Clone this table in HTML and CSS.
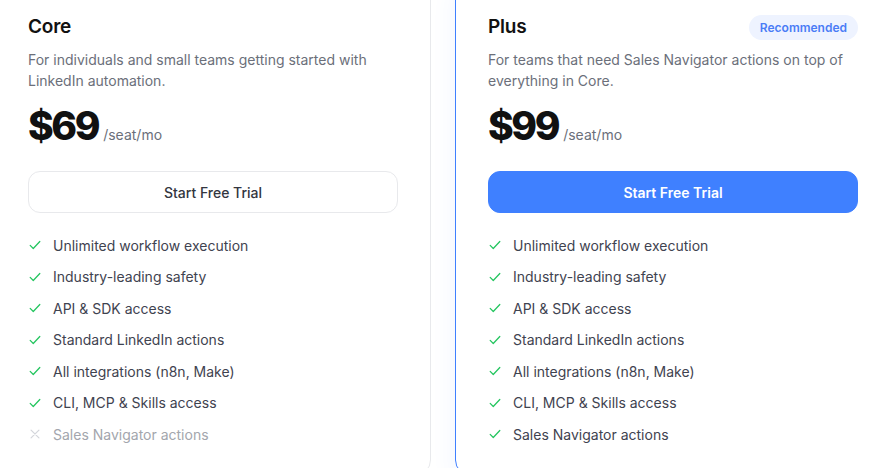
FILE: index.html
```html
<!DOCTYPE html>
<html lang="en">
<head>
    <meta charset="UTF-8">
    <meta name="viewport" content="width=device-width, initial-scale=1.0">
    <title>Pricing</title>
    <link rel="stylesheet" href="styles.css">
</head>
<body>
    <div class="pricing-grid">
        <div class="plan-card">
            <div class="plan-head">
                <h2 class="plan-name">Core</h2>
            </div>
            <p class="plan-desc">For individuals and small teams getting started with LinkedIn automation.</p>
            <div class="plan-price">
                <span class="price-amount">$69</span>
                <span class="price-unit">/seat/mo</span>
            </div>
            <button class="plan-button">Start Free Trial</button>
            <ul class="feature-list">
                <li class="feature"><svg class="feature-icon check" viewBox="0 0 16 16"><path d="M2.5 8.5l3.5 3.5 7.5-8"/></svg>Unlimited workflow execution</li>
                <li class="feature"><svg class="feature-icon check" viewBox="0 0 16 16"><path d="M2.5 8.5l3.5 3.5 7.5-8"/></svg>Industry-leading safety</li>
                <li class="feature"><svg class="feature-icon check" viewBox="0 0 16 16"><path d="M2.5 8.5l3.5 3.5 7.5-8"/></svg>API &amp; SDK access</li>
                <li class="feature"><svg class="feature-icon check" viewBox="0 0 16 16"><path d="M2.5 8.5l3.5 3.5 7.5-8"/></svg>Standard LinkedIn actions</li>
                <li class="feature"><svg class="feature-icon check" viewBox="0 0 16 16"><path d="M2.5 8.5l3.5 3.5 7.5-8"/></svg>All integrations (n8n, Make)</li>
                <li class="feature"><svg class="feature-icon check" viewBox="0 0 16 16"><path d="M2.5 8.5l3.5 3.5 7.5-8"/></svg>CLI, MCP &amp; Skills access</li>
                <li class="feature feature-off"><svg class="feature-icon cross" viewBox="0 0 16 16"><path d="M3.5 3.5l9 9M12.5 3.5l-9 9"/></svg>Sales Navigator actions</li>
            </ul>
        </div>

        <div class="plan-card plan-featured">
            <div class="plan-head">
                <h2 class="plan-name">Plus</h2>
                <span class="plan-badge">Recommended</span>
            </div>
            <p class="plan-desc">For teams that need Sales Navigator actions on top of everything in Core.</p>
            <div class="plan-price">
                <span class="price-amount">$99</span>
                <span class="price-unit">/seat/mo</span>
            </div>
            <button class="plan-button primary">Start Free Trial</button>
            <ul class="feature-list">
                <li class="feature"><svg class="feature-icon check" viewBox="0 0 16 16"><path d="M2.5 8.5l3.5 3.5 7.5-8"/></svg>Unlimited workflow execution</li>
                <li class="feature"><svg class="feature-icon check" viewBox="0 0 16 16"><path d="M2.5 8.5l3.5 3.5 7.5-8"/></svg>Industry-leading safety</li>
                <li class="feature"><svg class="feature-icon check" viewBox="0 0 16 16"><path d="M2.5 8.5l3.5 3.5 7.5-8"/></svg>API &amp; SDK access</li>
                <li class="feature"><svg class="feature-icon check" viewBox="0 0 16 16"><path d="M2.5 8.5l3.5 3.5 7.5-8"/></svg>Standard LinkedIn actions</li>
                <li class="feature"><svg class="feature-icon check" viewBox="0 0 16 16"><path d="M2.5 8.5l3.5 3.5 7.5-8"/></svg>All integrations (n8n, Make)</li>
                <li class="feature"><svg class="feature-icon check" viewBox="0 0 16 16"><path d="M2.5 8.5l3.5 3.5 7.5-8"/></svg>CLI, MCP &amp; Skills access</li>
                <li class="feature"><svg class="feature-icon check" viewBox="0 0 16 16"><path d="M2.5 8.5l3.5 3.5 7.5-8"/></svg>Sales Navigator actions</li>
            </ul>
        </div>
    </div>
</body>
</html>
```

FILE: styles.css
```css
:root {
    --primary-color: #3f80ff;
    --text-color: #111111;
    --muted-color: #6b6f7a;
    --feature-color: #3f4350;
    --border-color: #e8e9ec;
    --check-color: #22c55e;
}

body {
    margin: 0;
    padding: 0;
    font-family: Inter, 'Noto Sans', sans-serif;
    background-color: #ffffff;
    color: var(--text-color);
    overflow: hidden;
}

.pricing-grid {
    display: grid;
    grid-template-columns: 436px 436px;
    gap: 24px;
    margin: -21px 0 0 -5px;
}

.plan-card {
    border: 1px solid var(--border-color);
    border-radius: 16px;
    padding: 32px 32px 31px;
    background-color: white;
}

.plan-featured {
    border-color: var(--primary-color);
    box-shadow: 0 8px 24px rgba(63, 128, 255, 0.08);
}

.plan-head {
    display: flex;
    justify-content: space-between;
    align-items: center;
    height: 28px;
}

.plan-name {
    margin: 0;
    font-size: 19px;
    font-weight: 600;
    letter-spacing: -0.2px;
}

.plan-badge {
    background-color: #eef3ff;
    color: #4a7cf6;
    font-size: 12px;
    font-weight: 600;
    padding: 5px 11px;
    border-radius: 999px;
    margin-top: 2px;
}

.plan-desc {
    margin: 9px 0 0;
    font-size: 14px;
    line-height: 21px;
    color: var(--muted-color);
}

.plan-price {
    display: flex;
    align-items: baseline;
    gap: 5px;
    margin-top: 10px;
    height: 50px;
}

.price-amount {
    font-size: 39px;
    font-weight: 800;
    letter-spacing: -2.4px;
    line-height: 50px;
}

.price-unit {
    font-size: 14px;
    color: var(--muted-color);
}

.plan-button {
    display: block;
    width: 100%;
    height: 42px;
    margin-top: 20px;
    border: 1px solid var(--border-color);
    border-radius: 12px;
    background-color: white;
    color: #333640;
    font-family: inherit;
    font-size: 14px;
    font-weight: 500;
    cursor: pointer;
}

.plan-button.primary {
    background-color: var(--primary-color);
    border-color: var(--primary-color);
    color: white;
    font-weight: 600;
}

.feature-list {
    list-style: none;
    margin: 22px 0 0;
    padding: 0;
    display: flex;
    flex-direction: column;
    gap: 11.5px;
}

.feature {
    display: flex;
    align-items: center;
    gap: 11px;
    height: 20px;
    font-size: 14px;
    color: var(--feature-color);
}

.feature-icon {
    width: 14px;
    height: 14px;
    flex-shrink: 0;
    fill: none;
    stroke-width: 1.4;
    stroke-linecap: round;
    stroke-linejoin: round;
}

.feature-icon.check {
    stroke: var(--check-color);
}

.feature-icon.cross {
    stroke: #d4d6db;
}

.feature-off {
    color: #a3a6ad;
}
```
